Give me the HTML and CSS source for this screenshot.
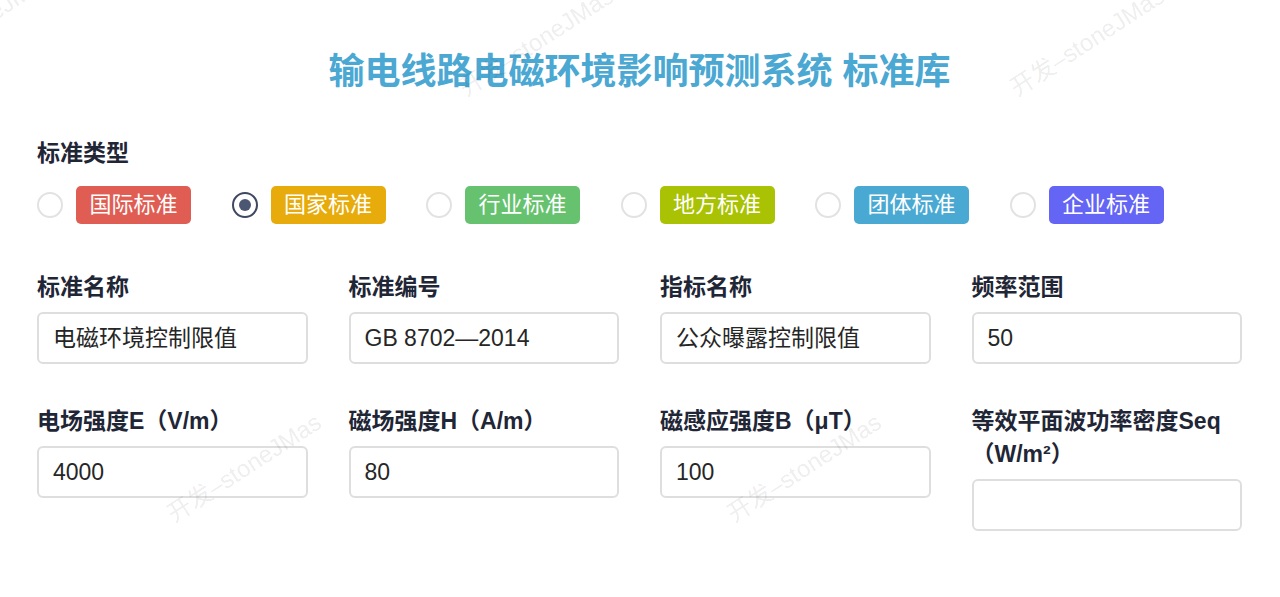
FILE: index.html
```html
<!DOCTYPE html>
<html lang="zh-CN">
<head>
<meta charset="utf-8">
<title>输电线路电磁环境影响预测系统 标准库</title>
<link rel="stylesheet" href="styles.css">
</head>
<body>
<div class="page">
  <h1 class="title">输电线路电磁环境影响预测系统 标准库</h1>

  <div class="section-label">标准类型</div>
  <div class="radio-row">
    <label class="radio-item"><span class="radio"></span><span class="badge badge-red">国际标准</span></label>
    <label class="radio-item"><span class="radio checked"></span><span class="badge badge-orange">国家标准</span></label>
    <label class="radio-item"><span class="radio"></span><span class="badge badge-green">行业标准</span></label>
    <label class="radio-item"><span class="radio"></span><span class="badge badge-lime">地方标准</span></label>
    <label class="radio-item"><span class="radio"></span><span class="badge badge-blue">团体标准</span></label>
    <label class="radio-item"><span class="radio"></span><span class="badge badge-indigo">企业标准</span></label>
  </div>

  <div class="form-grid">
    <div class="field">
      <div class="field-label">标准名称</div>
      <div class="input">电磁环境控制限值</div>
    </div>
    <div class="field">
      <div class="field-label">标准编号</div>
      <div class="input">GB 8702—2014</div>
    </div>
    <div class="field">
      <div class="field-label">指标名称</div>
      <div class="input">公众曝露控制限值</div>
    </div>
    <div class="field">
      <div class="field-label">频率范围</div>
      <div class="input">50</div>
    </div>
    <div class="field">
      <div class="field-label">电场强度E（V/m）</div>
      <div class="input">4000</div>
    </div>
    <div class="field">
      <div class="field-label">磁场强度H（A/m）</div>
      <div class="input">80</div>
    </div>
    <div class="field">
      <div class="field-label">磁感应强度B（μT）</div>
      <div class="input">100</div>
    </div>
    <div class="field">
      <div class="field-label">等效平面波功率密度Seq（W/m²）</div>
      <div class="input"></div>
    </div>
  </div>
</div>

<div class="watermark wm1">开发–stoneJMas</div>
<div class="watermark wm2">开发–stoneJMas</div>
<div class="watermark wm3">开发–stoneJMas</div>
<div class="watermark wm4">开发–stoneJMas</div>
<div class="watermark wm5">开发–stoneJMas</div>
</body>
</html>
```

FILE: styles.css
```css
* {
  box-sizing: border-box;
}

html, body {
  margin: 0;
  padding: 0;
  background: #ffffff;
}

body {
  font-family: "Liberation Sans", "Noto Sans CJK SC", sans-serif;
  color: #1f2636;
  overflow: hidden;
  position: relative;
  min-height: 597px;
}

.page {
  padding: 47px 38px 0 37px;
}

.title {
  margin: 0;
  text-align: center;
  font-size: 36px;
  line-height: 50px;
  font-weight: 700;
  color: #4aa8d3;
}

.section-label {
  margin-top: 40px;
  font-size: 23px;
  line-height: 33px;
  font-weight: 700;
  color: #1f2636;
}

.radio-row {
  display: flex;
  align-items: center;
  gap: 40.5px;
  margin-top: 16px;
  height: 38px;
}

.radio-item {
  display: flex;
  align-items: center;
  gap: 13px;
}

.radio {
  width: 26px;
  height: 26px;
  border-radius: 50%;
  border: 2px solid #e2e2e2;
  background: #fff;
  display: flex;
  align-items: center;
  justify-content: center;
}

.radio.checked {
  border-color: #3e4862;
}

.radio.checked::after {
  content: "";
  width: 12px;
  height: 12px;
  border-radius: 50%;
  background: #4b5672;
}

.badge {
  display: block;
  width: 115px;
  height: 38px;
  line-height: 38px;
  text-align: center;
  font-size: 22px;
  color: #ffffff;
  border-radius: 5px;
}

.badge-red { background: #e05d53; }
.badge-orange { background: #e7ab0b; }
.badge-green { background: #66c26f; }
.badge-lime { background: #a9c203; }
.badge-blue { background: #4aa9d3; }
.badge-indigo { background: #6464f5; }

.form-grid {
  margin-top: 47px;
  display: grid;
  grid-template-columns: repeat(4, 1fr);
  column-gap: 41px;
  row-gap: 41px;
  align-items: start;
}

.field-label {
  font-size: 23px;
  line-height: 33px;
  font-weight: 700;
  color: #1f2636;
  margin-bottom: 8px;
}

.input {
  height: 52px;
  border: 2px solid #dedede;
  border-radius: 6px;
  padding: 0 14px;
  font-size: 23px;
  line-height: 48px;
  color: #262626;
  background: #fff;
}

.watermark {
  position: absolute;
  transform: translate(-50%, -50%) rotate(-33deg);
  font-size: 24px;
  color: rgba(0, 0, 0, 0.085);
  white-space: nowrap;
  pointer-events: none;
}

.wm1 { left: -26px; top: 22px; }
.wm2 { left: 535px; top: 40px; }
.wm3 { left: 1086px; top: 40px; }
.wm4 { left: 243px; top: 466px; }
.wm5 { left: 803px; top: 466px; }
```
